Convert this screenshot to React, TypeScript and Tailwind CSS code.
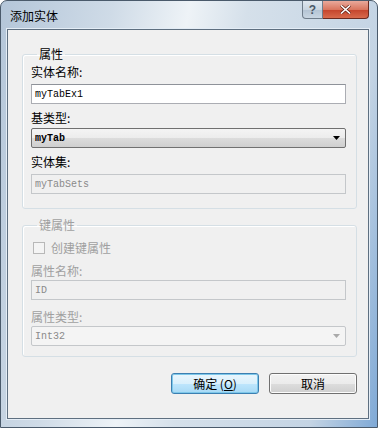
const font = { fontFamily: '"Noto Sans CJK SC", "Liberation Sans", sans-serif' };

const Label = ({ text, disabled, className = '' }: { text: string; disabled?: boolean; className?: string }) => (
    <div className={`h-[14px] text-[12px] leading-[14px] ${disabled ? 'text-[#a0a0a0]' : 'text-black'} ${className}`}>{text}</div>
);

const TextBox = ({ value, disabled, className = '' }: { value: string; disabled?: boolean; className?: string }) => (
    <div
        className={`h-[20px] w-full border px-[3px] flex items-center font-['Liberation_Mono',monospace] text-[10px] ${
            disabled
                ? 'bg-[#f0f0f0] border-[#c4c7ca] text-[#8a8a8a]'
                : 'bg-white border-[#abadb3] border-t-[#8e9299] text-black'
        } ${className}`}
    >
        {value}
    </div>
);

const ComboBox = ({ value, disabled, className = '' }: { value: string; disabled?: boolean; className?: string }) => (
    <div
        className={`h-[20px] w-full border rounded-[2px] pl-[3px] pr-[5px] flex items-center justify-between font-['Liberation_Mono',monospace] text-[10px] ${
            disabled
                ? 'bg-[#f4f4f4] border-[#c4c7ca] text-[#8a8a8a]'
                : 'bg-[linear-gradient(#f4f4f4,#ececec_50%,#dcdcdc_51%,#cfcfcf)] border-[#707070] text-black font-bold'
        } ${className}`}
    >
        <span>{value}</span>
        <svg width="7" height="4" viewBox="0 0 7 4">
            <path d="M0 0h7L3.5 4z" fill={disabled ? '#a9a9a9' : '#000'} />
        </svg>
    </div>
);

const VistaButton = ({ children, isDefault }: { children: React.ReactNode; isDefault?: boolean }) => (
    <div
        className={`w-[88px] h-[21px] rounded-[3px] border flex items-center justify-center text-[12px] text-black ${
            isDefault
                ? 'border-[#3c7fb1] bg-[linear-gradient(#eaf6fd,#d9f0fc_50%,#bee6fd_51%,#a7d9f5)] shadow-[inset_0_0_0_1px_#7ec8ea]'
                : 'border-[#707070] bg-[linear-gradient(#f2f2f2,#ebebeb_50%,#dddddd_51%,#cfcfcf)] shadow-[inset_0_0_0_1px_#fcfcfc]'
        }`}
    >
        {children}
    </div>
);

export default function App() {
    return (
        <div className="w-[378px] h-[428px] bg-white" style={font}>
            <div className="w-full h-full flex flex-col rounded-t-[7px] border border-[#4a5a6b] bg-[linear-gradient(100deg,#b4c6d9,#cfdbe7_25%,#eef3f7_42%,#d5e0ea_55%,#c4d4e4_85%,#7fa9d6)] overflow-hidden">
                {/* title bar */}
                <div className="h-[28px] flex items-start justify-between shrink-0">
                    <div className="pl-[9px] pt-[8px] text-[12px] leading-[14px] text-black">添加实体</div>
                    <div className="flex mr-[8px]">
                        <div className="w-[21px] h-[18px] border border-t-0 border-[#6f7d8b] rounded-bl-[4px] bg-[linear-gradient(#dfe7ef,#c9d5e1_50%,#b3c3d3_51%,#c9d6e2)] flex items-center justify-center text-[12px] font-bold text-[#4a5968] font-['Liberation_Sans',sans-serif]">
                            ?
                        </div>
                        <div className="w-[46px] h-[18px] border border-t-0 border-l-0 border-[#6b2a20] rounded-br-[4px] bg-[linear-gradient(#e9a99b,#d9765f_50%,#c4432b_51%,#d86a4c)] flex items-center justify-center">
                            <svg width="11" height="9" viewBox="0 0 11 9">
                                <path d="M1 0.5l9 8M10 0.5l-9 8" stroke="#5b1b10" strokeWidth="3" />
                                <path d="M1 0.5l9 8M10 0.5l-9 8" stroke="#fff" strokeWidth="1.6" />
                            </svg>
                        </div>
                    </div>
                </div>

                {/* client area */}
                <div className="flex-1 ml-[6px] mr-[8px] mb-[8px] border border-[#5e6f80] bg-[#f0f0f0] shadow-[0_0_0_1px_#e4edf6] flex flex-col pl-[14px] pr-[11px]">
                    <fieldset className="mt-[17px] border border-[#d5dfe5] rounded-[3px] shadow-[inset_1px_1px_0_#fff] pl-[8px] pr-[10px] pb-[14px]">
                        <legend className="ml-[6px] px-[2px] h-[14px] text-[12px] leading-[14px] text-black">属性</legend>
                        <Label text="实体名称:" className="mt-[4px]" />
                        <TextBox value="myTabEx1" className="mt-[5px]" />
                        <Label text="基类型:" className="mt-[7px]" />
                        <ComboBox value="myTab" className="mt-[3px]" />
                        <Label text="实体集:" className="mt-[7px]" />
                        <TextBox value="myTabSets" disabled className="mt-[5px]" />
                    </fieldset>

                    <fieldset className="mt-[9px] border border-[#d5dfe5] rounded-[3px] shadow-[inset_1px_1px_0_#fff] pl-[8px] pr-[10px] pb-[10px]">
                        <legend className="ml-[6px] px-[2px] h-[14px] text-[12px] leading-[14px] text-[#a0a0a0]">键属性</legend>
                        <div className="mt-[9px] flex items-center gap-[6px] h-[14px]">
                            <div className="ml-[2px] w-[12px] h-[12px] border border-[#b8b8b8] bg-[#f4f4f4]" />
                            <span className="text-[12px] leading-[14px] text-[#a0a0a0]">创建键属性</span>
                        </div>
                        <Label text="属性名称:" disabled className="mt-[9px]" />
                        <TextBox value="ID" disabled className="mt-[2px]" />
                        <Label text="属性类型:" disabled className="mt-[10px]" />
                        <ComboBox value="Int32" disabled className="mt-[2px]" />
                    </fieldset>

                    <div className="mt-[16px] flex justify-end gap-[10px]">
                        <VistaButton isDefault>
                            确定 (<span className="underline">O</span>)
                        </VistaButton>
                        <VistaButton>取消</VistaButton>
                    </div>
                </div>
            </div>
        </div>
    );
}
